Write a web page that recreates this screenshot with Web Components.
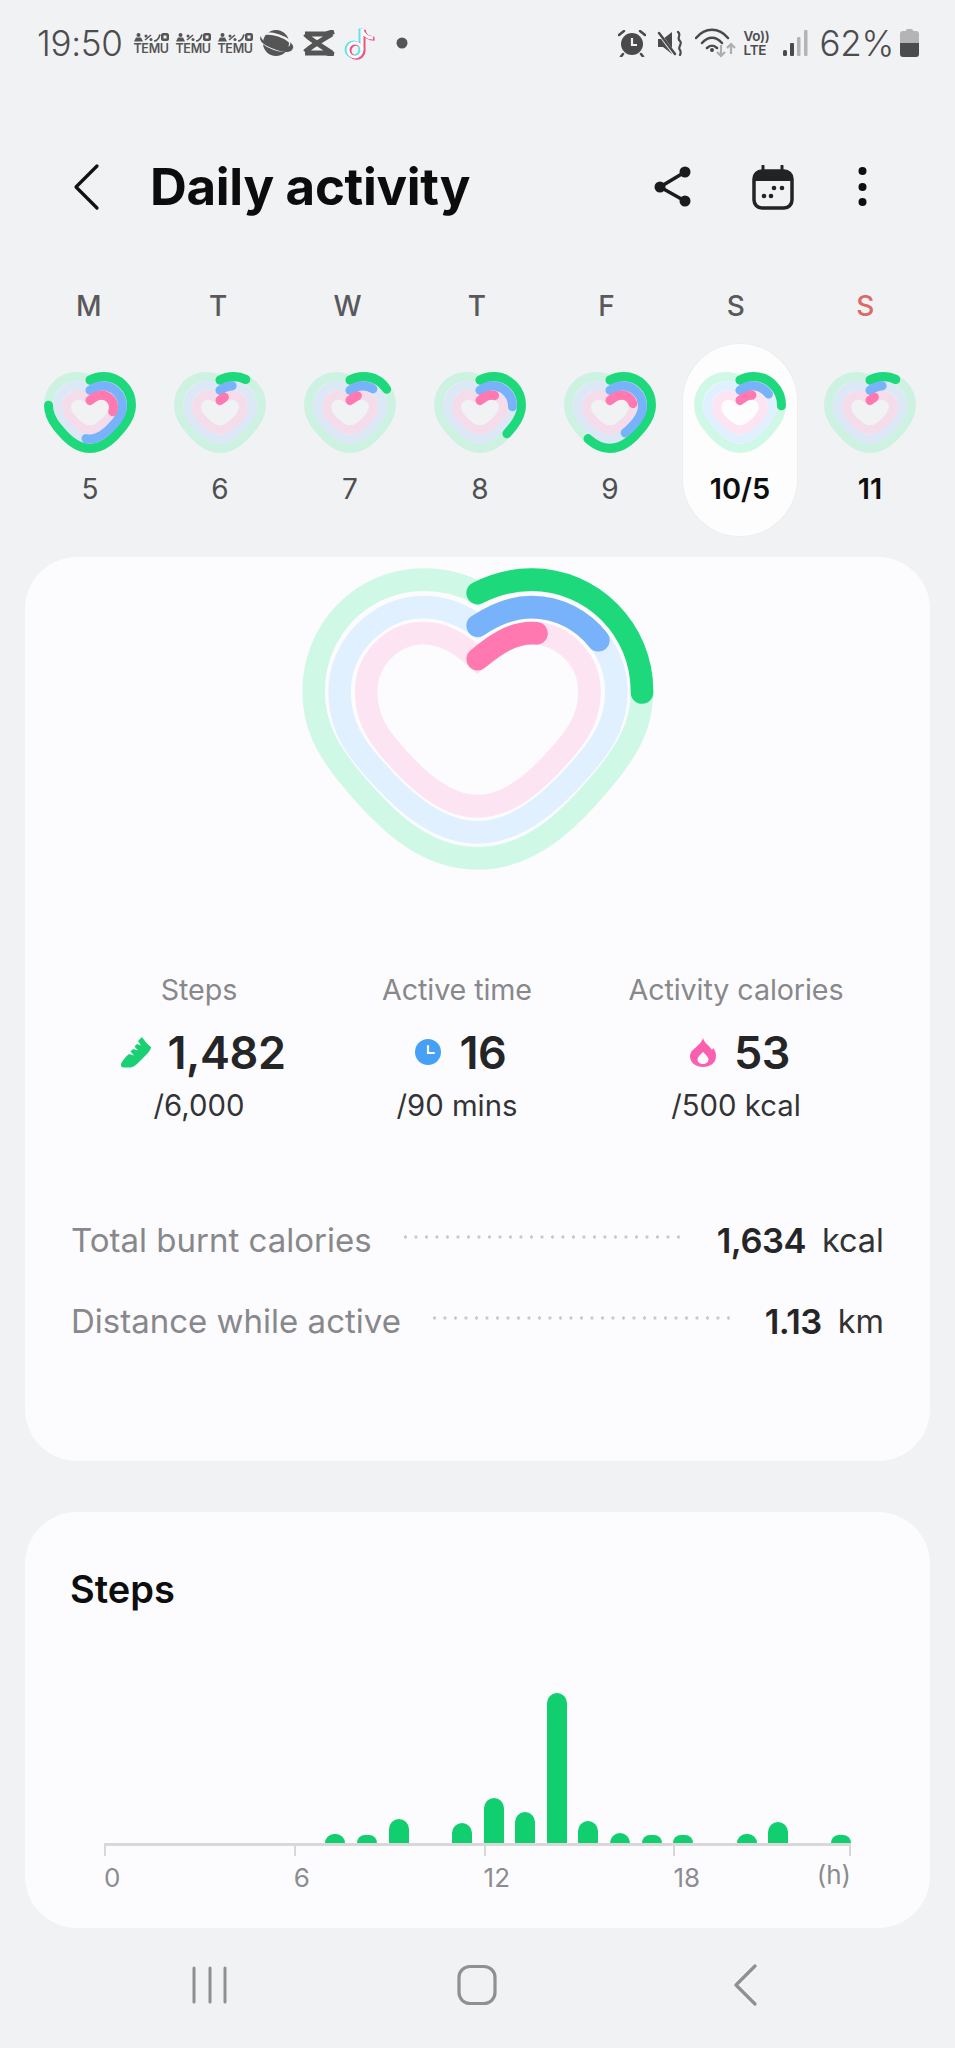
<!DOCTYPE html>
<html>
<head>
<meta charset="utf-8">
<title>Daily activity</title>
<style>
  html, body { margin: 0; padding: 0; }
  body {
    width: 955px;
    height: 2048px;
    overflow: hidden;
    background: #f1f2f4;
    font-family: "Inter", "Liberation Sans", sans-serif;
    display: flex;
    flex-direction: column;
  }
</style>
</head>
<body>
<status-bar></status-bar>
<top-bar title="Daily activity"></top-bar>
<week-strip></week-strip>

<summary-card>
  <activity-heart steps="24" time="16.8" cal="10.2" selected></activity-heart>
  <stat-item slot="stats" kind="steps" label="Steps" value="1,482" goal="/6,000"></stat-item>
  <stat-item slot="stats" kind="time" label="Active time" value="16" goal="/90 mins"></stat-item>
  <stat-item slot="stats" kind="cal" label="Activity calories" value="53" goal="/500 kcal"></stat-item>
  <detail-row slot="rows" label="Total burnt calories" value="1,634" unit="kcal"></detail-row>
  <detail-row slot="rows" label="Distance while active" value="1.13" unit="km"></detail-row>
</summary-card>

<steps-chart></steps-chart>
<nav-bar></nav-bar>

<script>
const GREEN_RING = "M593 130C650 100 700 90 755 90C940 90 1087 240 1087 425C1087 530 1040 600 990 665C880 800 760 925 593 925C425 925 305 800 195 665C145 600 100 530 100 425C100 240 245 90 430 90C490 90 540 100 593 130Z";
const BLUE_RING = "M593 228C650 190 700 172 755 172C895 172 1010 290 1010 425C1010 510 975 570 930 625C830 745 720 847 593 847C465 847 355 745 255 625C210 570 178 510 178 425C178 290 295 172 430 172C490 172 540 190 593 228Z";
const PINK_RING = "M593 328C650 280 700 250 755 250C850 250 929 330 929 425C929 490 905 535 870 580C780 690 690 769 593 769C495 769 405 690 315 580C280 535 258 490 258 425C258 330 335 250 430 250C490 250 540 280 593 328Z";

// squeeze a ring into a new box, the small hearts have closer rings
function fitRing(d, from, to) {
    let isX = true;
    return d.replace(/\d+/g, (n) => {
        const v = Number(n);
        const res = isX
            ? to[0] + (v - from[0]) * (to[1] - to[0]) / (from[1] - from[0])
            : to[2] + (v - from[2]) * (to[3] - to[2]) / (from[3] - from[2]);
        isX = !isX;
        return res.toFixed(1);
    });
}

const SMALL_GREEN = fitRing(GREEN_RING, [100, 1087, 90, 925], [117, 1068, 107, 908]);
const SMALL_BLUE = fitRing(BLUE_RING, [178, 1010, 172, 847], [220, 965, 210, 805]);
const SMALL_PINK = fitRing(PINK_RING, [258, 929, 250, 769], [323, 862, 313, 702]);

class ActivityHeart extends HTMLElement {
    constructor() {
        super();
        this.shadowDOM = this.attachShadow({mode: "open"});
    }

    connectedCallback() {
        this.render();
    }

    track(d, width, color) {
        return `<path d="${d}" fill="none" stroke="${color}" stroke-width="${width}"/>`;
    }

    arc(d, width, color, pct) {
        return `<path d="${d}" fill="none" stroke="${color}" stroke-width="${width}" stroke-linecap="round"
            pathLength="100" stroke-dasharray="${pct} 200"/>`;
    }

    render() {
        const small = this.hasAttribute("small");
        const lit = this.hasAttribute("selected");
        const tracks = lit ? ["#d0f8e6", "#e0f0fe", "#fce4f3"] : ["#cdf2e2", "#dce8f6", "#f5dcea"];
        const w = small ? 92 : 351;
        const h = small ? 81 : 302;
        const sw = small ? 103 : 68;
        const green = small ? SMALL_GREEN : GREEN_RING;
        const blue = small ? SMALL_BLUE : BLUE_RING;
        const pink = small ? SMALL_PINK : PINK_RING;
        this.shadowDOM.innerHTML = `
        <style>
        :host { display: block; width: ${w}px; height: ${h}px; }
        svg { display: block; overflow: visible; }
        </style>
        <svg width="${w}" height="${h}" viewBox="65 55 1055 905" preserveAspectRatio="none">
            ${this.track(green, sw, tracks[0])}
            ${this.track(blue, sw, tracks[1])}
            ${this.track(pink, sw, tracks[2])}
            ${this.arc(green, sw, "#1ed87c", this.getAttribute("steps"))}
            ${this.arc(blue, sw, "#78b2fb", this.getAttribute("time"))}
            ${this.arc(pink, sw, "#ff78b0", this.getAttribute("cal"))}
        </svg>`;
    }
}

class StatusBar extends HTMLElement {
    constructor() {
        super();
        this.shadowDOM = this.attachShadow({mode: "open"});
        const temu = `
            <div class="temu">
                <svg width="35" height="9" viewBox="0 0 35 9" fill="#555">
                    <circle cx="4.500" cy="2" r="2"/>
                    <path d="M2 4.500H7L9 8.500H0Z"/>
                    <circle cx="12" cy="3" r="1.500"/><circle cx="17" cy="6.500" r="1.500"/>
                    <path d="M11 7L17 2" stroke="#555" stroke-width="1.500"/>
                    <path d="M20 8C23 8 25 5 26 1.500" fill="none" stroke="#555" stroke-width="1.700"/>
                    <path fill-rule="evenodd" d="M29 0H33C34 0 35 1 35 2V6C35 7 34 8 33 8H29C28 8 27 7 27 6V2C27 1 28 0 29 0ZM29.500 2.500V5.500H32.500V2.500Z"/>
                </svg>
                <span>TEMU</span>
            </div>`;
        this.shadowDOM.innerHTML = `
        <style>
        :host {
            display: flex;
            height: 86px;
            box-sizing: border-box;
            padding: 0 36px 0 37px;
            align-items: center;
            justify-content: space-between;
            color: #4c4c4e;
        }
        .group { display: flex; align-items: center; }
        .time, .batt-text { font-size: 35px; font-weight: 300; letter-spacing: -0.3px; line-height: 40px; }
        svg { display: block; flex: none; }
        .temu { display: flex; flex-direction: column; align-items: center; width: 35px; margin-right: 7px; }
        .temu span { font-size: 12.500px; line-height: 11px; font-weight: 600; margin-top: 1px; letter-spacing: -0.3px; color: #555; }
        .volte { display: flex; flex-direction: column; font-size: 13.500px; line-height: 14px; font-weight: 600; width: 30px; letter-spacing: -0.3px; }
        </style>
        <div class="group">
            <span class="time">19:50</span>
            <span style="width:11px"></span>
            ${temu}${temu}${temu}
            <svg style="margin-left:-1px" width="35" height="28" viewBox="0 0 35 28">
                <circle cx="17" cy="14" r="13" fill="#555"/>
                <ellipse cx="17" cy="13" rx="17" ry="7" transform="rotate(18 17 14)" fill="none" stroke="#f1f2f4" stroke-width="2.500"/>
                <path d="M2 7C-1 11 4 16 15 20C25 24 33 24 34 19C35 17 33 15 31 13C33 19 24 21 15 17C7 14 2 11 2 7Z" fill="#555"/>
            </svg>
            <svg style="margin-left:8px" width="33" height="26" viewBox="0 0 33 26" fill="none" stroke="#555" stroke-width="5">
                <path d="M3 4H24L32 1.500M3 4C8 9 22 18 30 23M30 4C22 9 8 17 3 22M3 23H24L32 24.500"/>
            </svg>
            <svg style="margin-left:9px" width="31" height="35" viewBox="0 0 31 35" fill="none" stroke-width="4">
                <g transform="translate(-1.500 -.5)" stroke="#5fe3ea"><circle cx="11" cy="24" r="7"/><path d="M18 24V3M18 3C19 9 24 12 29 12"/></g>
                <g transform="translate(1.500 .8)" stroke="#f2517a"><circle cx="11" cy="24" r="7"/><path d="M18 24V3M18 3C19 9 24 12 29 12"/></g>
                <g stroke="#fbfbfd" stroke-width="3"><circle cx="11" cy="24" r="7"/><path d="M18 24V3M18 3C19 9 24 12 29 12"/></g>
            </svg>
            <svg style="margin-left:21px" width="12" height="12"><circle cx="6" cy="6" r="5.500" fill="#555"/></svg>
        </div>
        <div class="group">
            <svg width="28" height="27" viewBox="0 0 28 27">
                <circle cx="14" cy="14" r="11" fill="#4a4a4c"/>
                <path d="M14 8V15H19" fill="none" stroke="#f1f2f4" stroke-width="2.200"/>
                <path d="M1 5L6 1M27 5L22 1M5 24L3 26.500M23 24L25 26.500" stroke="#4a4a4c" stroke-width="2.500" stroke-linecap="round"/>
            </svg>
            <svg style="margin-left:11px" width="27" height="26" viewBox="0 0 27 26">
                <path d="M1 9H6L15 2V24L6 17H1Z" fill="#4a4a4c"/>
                <path d="M1 2L18 25" stroke="#f1f2f4" stroke-width="3.500"/>
                <path d="M2 3L18 24" stroke="#4a4a4c" stroke-width="2.500" stroke-linecap="round"/>
                <path d="M21 2C25 5 19 8 23 11C26 14 20 17 23 20C24 22 24 23 23 25" fill="none" stroke="#4a4a4c" stroke-width="2.200" stroke-linecap="round"/>
            </svg>
            <svg style="margin-left:11px" width="41" height="30" viewBox="0 0 41 30" fill="none">
                <path d="M1 10C10 -1 24 -1 33 10M7 15C13 8 21 8 27 15M12 20C15 17 19 17 22 20" stroke="#4a4a4c" stroke-width="2.500" stroke-linecap="round"/>
                <circle cx="17" cy="22" r="2" fill="#4a4a4c"/>
                <path d="M26 17V28M22 24L26 28 30 24M36 26V16M32 20L36 16 40 20" stroke="#aeaeae" stroke-width="2.200"/>
            </svg>
            <div class="volte" style="margin-left:8px"><span>Vo))</span><span>LTE</span></div>
            <svg style="margin-left:9px" width="26" height="27" viewBox="0 0 26 27">
                <rect x="0" y="20" width="4" height="6" rx="1.500" fill="#4a4a4c"/>
                <rect x="7" y="13" width="4" height="13" rx="1" fill="#4a4a4c"/>
                <rect x="14" y="7" width="3.500" height="19" rx="1" fill="#b4b4b4"/>
                <rect x="21" y="0" width="3.500" height="26" rx="1" fill="#b4b4b4"/>
            </svg>
            <span class="batt-text" style="margin-left:11px">62%</span>
            <svg style="margin-left:6px" width="19" height="28" viewBox="0 0 19 28">
                <path d="M6 1.500C6 .5 7 0 8 0H11C12 0 13 .5 13 1.500V2H16C18 2 19 3 19 5V14H0V5C0 3 1 2 3 2H6Z" fill="#b4b4b4"/>
                <path d="M0 14H19V25C19 27 18 28 16 28H3C1 28 0 27 0 25Z" fill="#4c4c4e"/>
            </svg>
        </div>`;
    }
}

class TopBar extends HTMLElement {
    constructor() {
        super();
        this.shadowDOM = this.attachShadow({mode: "open"});
    }

    connectedCallback() {
        this.shadowDOM.innerHTML = `
        <style>
        :host {
            display: flex;
            align-items: center;
            height: 86px;
            margin-top: 58px;
            padding-left: 72px;
            color: #0c0c0d;
        }
        svg { display: block; flex: none; }
        h1 { margin: -2px 0 0 48px; font-size: 51px; font-weight: 700; letter-spacing: -0.3px; flex: 1; }
        </style>
        <svg width="30" height="50" viewBox="0 0 30 50">
            <path d="M25 4L4 25 25 46" fill="none" stroke="#111" stroke-width="3.200" stroke-linecap="round" stroke-linejoin="round"/>
        </svg>
        <h1>${this.getAttribute("title")}</h1>
        <svg width="40" height="44" viewBox="0 0 40 44">
            <path d="M32 7L7 22 32 36" fill="none" stroke="#1b1b1c" stroke-width="3.500"/>
            <circle cx="32" cy="7" r="5.500" fill="#1b1b1c"/><circle cx="7" cy="22" r="5.500" fill="#1b1b1c"/><circle cx="32" cy="36" r="5.500" fill="#1b1b1c"/>
        </svg>
        <svg style="margin-left:58px" width="43" height="45" viewBox="0 0 43 45">
            <rect x="3" y="6" width="38" height="37" rx="8" fill="none" stroke="#232325" stroke-width="3.500"/>
            <path d="M3 14C3 9 6 6 11 6H33C38 6 41 9 41 14V16H3Z" fill="#232325"/>
            <path d="M12 1V8M31 1V8" stroke="#232325" stroke-width="3" stroke-linecap="round"/>
            <circle cx="13" cy="31" r="2.300" fill="#232325"/><circle cx="20" cy="31" r="2.300" fill="#232325"/>
            <circle cx="23" cy="23" r="2.300" fill="#232325"/><circle cx="31" cy="23" r="2.300" fill="#232325"/>
        </svg>
        <svg style="margin:0 88px 0 64px" width="9" height="40" viewBox="0 0 9 40" fill="#0f0f10">
            <circle cx="4.500" cy="4" r="4"/><circle cx="4.500" cy="20" r="4"/><circle cx="4.500" cy="35" r="4"/>
        </svg>`;
    }
}

const WEEK = [
    {d: "M", n: "5", s: 76, t: 52, c: 27},
    {d: "T", n: "6", s: 11, t: 7, c: 4},
    {d: "W", n: "7", s: 17, t: 13, c: 6.500},
    {d: "T", n: "8", s: 37, t: 24, c: 12},
    {d: "F", n: "9", s: 60, t: 41, c: 21},
    {d: "S", n: "10/5", s: 24, t: 17, c: 10, sel: true},
    {d: "S", n: "11", s: 11, t: 7, c: 4, red: true},
];

class WeekStrip extends HTMLElement {
    constructor() {
        super();
        this.shadowDOM = this.attachShadow({mode: "open"});
    }

    connectedCallback() {
        const labels = WEEK.map((x) => `<span class="${x.red ? "red" : ""}">${x.d}</span>`).join("");
        const days = WEEK.map((x, i) => `
            <div class="day ${x.sel ? "sel" : ""} ${i > 4 ? "dark" : ""}">
                <activity-heart small ${x.sel ? "selected" : ""} steps="${x.s}" time="${x.t}" cal="${x.c}"></activity-heart>
                <span>${x.n}</span>
            </div>`).join("");
        this.shadowDOM.innerHTML = `
        <style>
        :host { display: block; }
        .labels {
            display: grid;
            grid-template-columns: repeat(7, 1fr);
            padding: 0 25px 0 24px;
            height: 40px;
            margin-top: 56px;
            margin-bottom: 18px;
            line-height: 40px;
            text-align: center;
            font-size: 28px;
            font-weight: 500;
            color: #59595b;
        }
        .red { color: #dd6a66; }
        .days {
            display: grid;
            grid-template-columns: repeat(7, 130px);
            padding-left: 25px;
        }
        .day {
            box-sizing: border-box;
            height: 192px;
            padding-top: 28px;
            display: flex;
            flex-direction: column;
            align-items: center;
            font-size: 28px;
            color: #4f4f52;
        }
        .day span { margin-top: 16px; line-height: 40px; }
        .day.dark { color: #0e0e0f; font-weight: 600; font-size: 29px; }
        .day.sel {
            background: #fdfdfe;
            width: 114px;
            margin-left: 8px;
            border-radius: 57px;
            box-shadow: 0 0 0 1px #eeeef0;
        }
        </style>
        <div class="labels">${labels}</div>
        <div class="days">${days}</div>`;
    }
}

class SummaryCard extends HTMLElement {
    constructor() {
        super();
        this.shadowDOM = this.attachShadow({mode: "open"});
        this.shadowDOM.innerHTML = `
        <style>
        :host {
            display: flex;
            flex-direction: column;
            box-sizing: border-box;
            width: 905px;
            height: 904px;
            margin: 21px 0 0 25px;
            padding: 11px 46px 0;
            background: #fcfcfe;
            border-radius: 52px;
        }
        .top { display: flex; justify-content: center; }
        .stats {
            display: grid;
            grid-template-columns: 256px 260px 298px;
            margin-top: 100px;
        }
        .rows { display: flex; flex-direction: column; gap: 41px; margin-top: 94px; }
        </style>
        <div class="top"><slot></slot></div>
        <div class="stats"><slot name="stats"></slot></div>
        <div class="rows"><slot name="rows"></slot></div>`;
    }
}

const STAT_ICONS = {
    steps: `<svg width="32" height="31" viewBox="0 0 32 31">
        <path d="M22 0C24 3 28 8 31 10C31 13 28 16 25 19L17 27C14 30 11 30.500 8 30.500H4C1 30.500 0 28 2 25C4 22 6 19 9 17L14 18.500L10.500 14.500L13 12L18 13.500L14.500 9.500L17 7L21 8.500L18 4Z" fill="#19d173"/>
    </svg>`,
    time: `<svg width="26" height="26" viewBox="0 0 26 26">
        <circle cx="13" cy="13" r="13" fill="#46a1f6"/>
        <path d="M13 7V14H19" fill="none" stroke="#fcfcfe" stroke-width="2.200" stroke-linecap="round"/>
    </svg>`,
    cal: `<svg width="26" height="29" viewBox="0 0 26 29">
        <path fill-rule="evenodd" d="M13 0C14 5 19 7 22 12L23 10C25 12 26 15 26 18C26 25 20 29 13 29C6 29 0 25 0 18C0 11 11 8 13 0ZM13 14C10 17 7.500 19 7.500 21.500C7.500 24 10 26 13 26C16 26 18.500 24 18.500 21.500C18.500 19 15 16 13 14Z" fill="#fb5fb0"/>
    </svg>`,
};

class StatItem extends HTMLElement {
    constructor() {
        super();
        this.shadowDOM = this.attachShadow({mode: "open"});
    }

    connectedCallback() {
        const gap = this.getAttribute("kind") === "steps" ? 15 : 18;
        this.shadowDOM.innerHTML = `
        <style>
        :host { display: flex; flex-direction: column; align-items: center; }
        .label { font-size: 28.700px; line-height: 40px; color: #88888c; letter-spacing: -0.1px; }
        .value {
            display: flex;
            align-items: center;
            gap: ${gap}px;
            height: 50px;
            margin-top: 17px;
            padding-left: 8px;
            font-size: 45px;
            font-weight: 600;
            color: #252527;
            letter-spacing: -0.4px;
        }
        svg { display: block; flex: none; }
        .goal { font-size: 29.300px; line-height: 40px; margin-top: 9px; color: #333336; }
        </style>
        <span class="label">${this.getAttribute("label")}</span>
        <div class="value">${STAT_ICONS[this.getAttribute("kind")]}<span>${this.getAttribute("value")}</span></div>
        <span class="goal">${this.getAttribute("goal")}</span>`;
    }
}

class DetailRow extends HTMLElement {
    constructor() {
        super();
        this.shadowDOM = this.attachShadow({mode: "open"});
    }

    connectedCallback() {
        this.shadowDOM.innerHTML = `
        <style>
        :host {
            display: flex;
            align-items: center;
            height: 40px;
            font-size: 33px;
            color: #88888c;
        }
        .dots {
            flex: 1;
            height: 4px;
            margin: -6px 30px 0 32px;
            background: radial-gradient(circle at 1.500px 2px, #c9c9cb 1.400px, transparent 1.900px) 0 0 / 10.500px 4px repeat-x;
        }
        b { font-weight: 600; color: #252527; font-size: 34.500px; letter-spacing: -0.5px; }
        .unit { margin-left: 16px; font-size: 32.500px; color: #333336; }
        </style>
        <span>${this.getAttribute("label")}</span>
        <div class="dots"></div>
        <b>${this.getAttribute("value")}</b>
        <span class="unit">${this.getAttribute("unit")}</span>`;
    }
}

// hour -> height in px, empty hours stay out
const HOURS = {7: 9, 8: 8, 9: 24, 11: 20, 12: 45, 13: 31, 14: 150, 15: 22, 16: 10, 17: 8, 18: 8, 20: 9, 21: 21, 23: 8};

class StepsChart extends HTMLElement {
    constructor() {
        super();
        this.shadowDOM = this.attachShadow({mode: "open"});
    }

    connectedCallback() {
        let bars = "";
        for (let h = 0; h < 24; h++) {
            bars += `<div class="col">${HOURS[h] ? `<i style="height:${HOURS[h]}px"></i>` : ""}</div>`;
        }
        this.shadowDOM.innerHTML = `
        <style>
        :host {
            display: block;
            box-sizing: border-box;
            width: 905px;
            height: 416px;
            margin: 51px 0 0 25px;
            padding: 54px 79px 0 45px;
            background: #fcfcfe;
            border-radius: 52px;
        }
        h2 { margin: 0; font-size: 38px; line-height: 46px; font-weight: 600; color: #0e0e0f; }
        .bars {
            display: grid;
            grid-template-columns: repeat(23, 31.630px) 20px;
            align-items: end;
            height: 155px;
            margin: 76px 0 0 34px;
        }
        .col { display: flex; align-items: flex-end; }
        i { display: block; width: 20px; background: #11cf6f; border-radius: 10px 10px 0 0; }
        .axis {
            display: grid;
            grid-template-columns: repeat(3, 189.800px) 1fr;
            margin-left: 34px;
            border-top: 3px solid #d8d8da;
            color: #8c8c90;
            font-size: 26px;
        }
        .tick { display: block; width: 0; height: 10px; border-left: 2px solid #d8d8da; }
        .ticks { display: flex; justify-content: space-between; height: 10px; }
        .names { display: flex; justify-content: space-between; line-height: 30px; padding-top: 7px; }
        .names span:last-child:not(:first-child) { margin-top: -3px; }
        </style>
        <h2>Steps</h2>
        <div class="bars">${bars}</div>
        <div class="axis">
            <div><span class="tick"></span><div class="names"><span>0</span></div></div>
            <div><span class="tick"></span><div class="names"><span>6</span></div></div>
            <div><span class="tick"></span><div class="names"><span>12</span></div></div>
            <div>
                <div class="ticks"><span class="tick"></span><span class="tick"></span></div>
                <div class="names"><span>18</span><span>(h)</span></div>
            </div>
        </div>`;
    }
}

class NavBar extends HTMLElement {
    constructor() {
        super();
        this.shadowDOM = this.attachShadow({mode: "open"});
        this.shadowDOM.innerHTML = `
        <style>
        :host {
            display: flex;
            align-items: center;
            justify-content: space-between;
            height: 114px;
            box-sizing: border-box;
            padding: 0 197px 0 192px;
        }
        svg { display: block; }
        </style>
        <svg width="36" height="40" viewBox="0 0 36 40" fill="none" stroke="#909093" stroke-width="3" stroke-linecap="round">
            <path d="M2 3V37M18 3V37M33 3V37"/>
        </svg>
        <svg style="margin-right:6px" width="42" height="42" viewBox="0 0 42 42">
            <rect x="3" y="2.500" width="36" height="37" rx="11" fill="none" stroke="#909093" stroke-width="3.200"/>
        </svg>
        <svg width="26" height="42" viewBox="0 0 26 42" fill="none" stroke="#909093" stroke-width="3.200" stroke-linecap="round" stroke-linejoin="round">
            <path d="M23 2L4 21 23 40"/>
        </svg>`;
    }
}

customElements.define("activity-heart", ActivityHeart);
customElements.define("status-bar", StatusBar);
customElements.define("top-bar", TopBar);
customElements.define("week-strip", WeekStrip);
customElements.define("summary-card", SummaryCard);
customElements.define("stat-item", StatItem);
customElements.define("detail-row", DetailRow);
customElements.define("steps-chart", StepsChart);
customElements.define("nav-bar", NavBar);
</script>
</body>
</html>
